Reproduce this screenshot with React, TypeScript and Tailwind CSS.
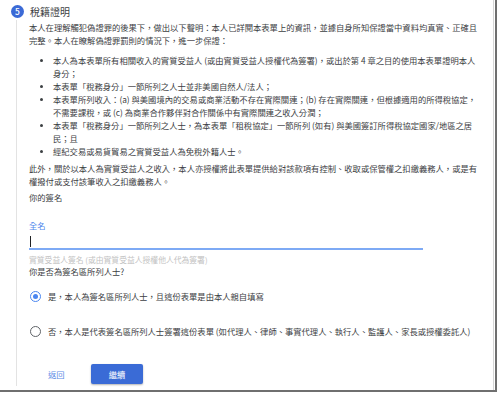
import React from "react";

const font = {
  fontFamily: '"Noto Sans CJK TC", "Noto Sans", Roboto, sans-serif',
};

function Bullet({ lines }: { lines: string[] }) {
  return (
    <div className="flex">
      <div className="w-[24px] flex justify-center pt-[5px] shrink-0">
        <div className="w-[3px] h-[3px] rounded-full bg-[#3c4043]" />
      </div>
      <div>
        {lines.map((l, i) => (
          <div key={i} className="whitespace-nowrap">
            {l}
          </div>
        ))}
      </div>
    </div>
  );
}

export default function App() {
  return (
    <div className="w-[500px] h-[395px] bg-white overflow-hidden" style={font}>
      <div className="w-[497px] h-[392px] border-r-2 border-b-2 border-[#6f6f6f] bg-white">
        <div className="h-full border-r border-[#d6d6d6] mr-[1px] flex flex-col">
          {/* header */}
          <div className="flex items-center pl-[11px] pt-[3px] h-[17px] box-content">
            <div className="w-[13px] h-[13px] rounded-full bg-[#3b6ad6] text-white text-[8.5px] leading-none flex items-center justify-center font-medium">
              5
            </div>
            <div className="ml-[6px] text-[10px] text-[#3c4043] leading-none">稅籍證明</div>
          </div>
          {/* body */}
          <div className="ml-[16px] border-l border-[#e3e3e3] pl-[12px] pt-[1px] flex-1 mb-[4px] text-[8.3px] leading-[13px] text-[#3c4043]">
            <div>
              <div className="whitespace-nowrap">
                本人在理解觸犯偽證罪的後果下，做出以下聲明：本人已詳閱本表單上的資訊，並據自身所知保證當中資料均真實、正確且
              </div>
              <div className="whitespace-nowrap">完整。本人在瞭解偽證罪罰則的情況下，進一步保證：</div>
            </div>
            <div className="mt-[7px]">
              <Bullet
                lines={[
                  "本人為本表單所有相關收入的實質受益人 (或由實質受益人授權代為簽署)，或出於第 4 章之目的使用本表單證明本人",
                  "身分；",
                ]}
              />
              <Bullet lines={["本表單「稅務身分」一節所列之人士並非美國自然人/法人；"]} />
              <Bullet
                lines={[
                  "本表單所列收入：(a) 與美國境內的交易或商業活動不存在實際關連；(b) 存在實際關連，但根據適用的所得稅協定，",
                  "不需要課稅，或 (c) 為商業合作夥伴對合作關係中有實際關連之收入分潤；",
                ]}
              />
              <Bullet
                lines={[
                  "本表單「稅務身分」一節所列之人士，為本表單「租稅協定」一節所列 (如有) 與美國簽訂所得稅協定國家/地區之居",
                  "民；且",
                ]}
              />
              <Bullet lines={["經紀交易或易貨貿易之實質受益人為免稅外籍人士。"]} />
            </div>
            <div className="mt-[4px]">
              <div className="whitespace-nowrap">
                此外，關於以本人為實質受益人之收入，本人亦授權將此表單提供給對該款項有控制、收取或保管權之扣繳義務人，或是有
              </div>
              <div className="whitespace-nowrap">權撥付或支付該筆收入之扣繳義務人。</div>
            </div>
            <div className="mt-[3px]">你的簽名</div>
            <div className="mt-[15px] text-[#4f86ec]">全名</div>
            <div className="mt-[4px] w-[394px] h-[14px] border-b-2 border-[#7eaaf5] flex items-end pb-[1px]">
              <div className="w-[1px] h-[11px] bg-[#202124] ml-[1px]" />
            </div>
            <div className="mt-[4px] text-[7.8px] leading-[11px] text-[#c2c2c2]">
              實質受益人簽名 (或由實質受益人授權他人代為簽署)
            </div>
            <div className="mt-[0px]">你是否為簽名區所列人士?</div>
            <div className="mt-[12px] flex items-center h-[13px]">
              <div className="w-[11px] h-[11px] rounded-full border-[1.5px] border-[#4a86f0] flex items-center justify-center ml-[1px]">
                <div className="w-[5px] h-[5px] rounded-full bg-[#4a86f0]" />
              </div>
              <div className="ml-[7px] whitespace-nowrap">是，本人為簽名區所列人士，且這份表單是由本人親自填寫</div>
            </div>
            <div className="mt-[22px] flex items-center h-[13px]">
              <div className="w-[11px] h-[11px] rounded-full border-[1.5px] border-[#5f6368] ml-[1px]" />
              <div className="ml-[7px] whitespace-nowrap">
                否，本人是代表簽名區所列人士簽署這份表單 (如代理人、律師、事實代理人、執行人、監護人、家長或授權委託人)
              </div>
            </div>
            <div className="mt-[26px] flex items-center">
              <div className="w-[62px] pl-[19px] text-[#5a8ae6]">返回</div>
              <div className="w-[52px] h-[20px] rounded-[2px] bg-[#3a6bd6] text-white flex items-center justify-center shadow-[0_1px_2px_rgba(0,0,0,0.3)]">
                繼續
              </div>
            </div>
          </div>
        </div>
      </div>
    </div>
  );
}
